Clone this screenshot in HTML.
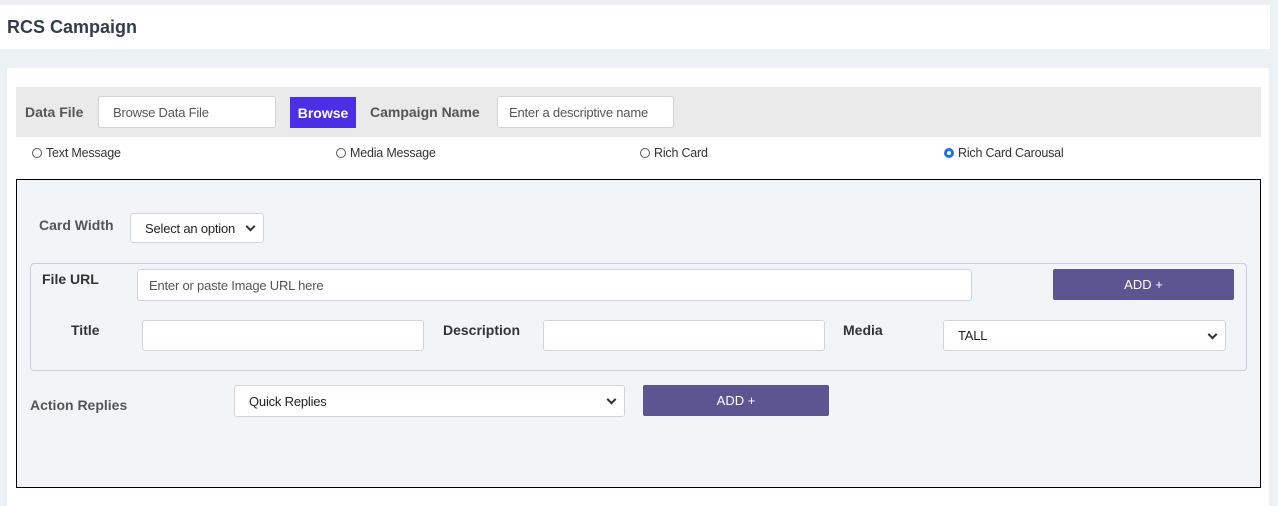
<!DOCTYPE html>
<html><head><style>
body{margin:0;width:1278px;height:506px;background:#ebf1f5;font-family:"Liberation Sans",sans-serif;position:relative;overflow:hidden}
.a{position:absolute;box-sizing:border-box}
.lbl{font-weight:bold;color:#555;font-size:14px}
.inp{background:#fff;border:1px solid #ced4da;border-radius:3px;font-size:13px;color:#555;padding-left:14px;display:flex;align-items:center;letter-spacing:-0.2px}
.btn{background:#5c5591;color:#fff;font-size:13px;display:flex;align-items:center;justify-content:center;border-radius:2px}
.r{font-size:12.5px;color:#333;display:flex;align-items:center;letter-spacing:-0.2px}
.r i{display:inline-block;width:10px;height:10px;border:1px solid #555;border-radius:50%;margin-right:4px;box-sizing:border-box}
.chev{position:absolute;right:9px;top:50%;width:5px;height:5px;border-right:2px solid #333;border-bottom:2px solid #333;transform:translateY(-70%) rotate(45deg)}
</style></head><body>
<div class="a" style="left:0;top:5px;width:1270px;height:44px;background:#fff"></div>
<div class="a" style="left:7px;top:17px;font-weight:bold;font-size:18px;color:#333c4e">RCS Campaign</div>
<div class="a" style="left:7px;top:68px;width:1262px;height:438px;background:#fff"></div>
<div class="a" style="left:16px;top:87px;width:1245px;height:50px;background:#eaeaea"></div>
<div class="a lbl" style="left:25px;top:104px">Data File</div>
<div class="a inp" style="left:98px;top:96px;width:178px;height:32px">Browse Data File</div>
<div class="a" style="left:290px;top:97px;width:66px;height:31px;background:#4b2ee6;color:#fff;font-weight:bold;font-size:14px;display:flex;align-items:center;justify-content:center">Browse</div>
<div class="a lbl" style="left:370px;top:104px">Campaign Name</div>
<div class="a inp" style="left:497px;top:96px;width:177px;height:32px;padding-left:11px">Enter a descriptive name</div>
<div class="a r" style="left:32px;top:146px"><i></i>Text Message</div>
<div class="a r" style="left:336px;top:146px"><i></i>Media Message</div>
<div class="a r" style="left:640px;top:146px"><i></i>Rich Card</div>
<div class="a r" style="left:944px;top:146px"><i style="border:3px solid #1a73e8"></i>Rich Card Carousal</div>
<div class="a" style="left:16px;top:179px;width:1245px;height:309px;background:#f2f5f8;border:1px solid #000"></div>
<div class="a lbl" style="left:39px;top:217px">Card Width</div>
<div class="a inp" style="left:130px;top:213px;width:134px;height:30px;color:#222">Select an option<span class="chev"></span></div>
<div class="a" style="left:30px;top:263px;width:1217px;height:108px;border:1px solid #ccd;border-radius:4px"></div>
<div class="a lbl" style="left:42px;top:271px;color:#333">File URL</div>
<div class="a inp" style="left:137px;top:269px;width:835px;height:32px;padding-left:11px">Enter or paste Image URL here</div>
<div class="a btn" style="left:1053px;top:269px;width:181px;height:31px">ADD +</div>
<div class="a lbl" style="left:71px;top:322px;color:#333">Title</div>
<div class="a inp" style="left:142px;top:320px;width:282px;height:31px"></div>
<div class="a lbl" style="left:443px;top:322px;color:#333">Description</div>
<div class="a inp" style="left:543px;top:320px;width:282px;height:31px"></div>
<div class="a lbl" style="left:843px;top:322px;color:#333">Media</div>
<div class="a inp" style="left:943px;top:320px;width:283px;height:31px;color:#222">TALL<span class="chev"></span></div>
<div class="a lbl" style="left:30px;top:397px">Action Replies</div>
<div class="a inp" style="left:234px;top:385px;width:391px;height:32px;color:#222">Quick Replies<span class="chev"></span></div>
<div class="a btn" style="left:643px;top:385px;width:186px;height:31px">ADD +</div>
</body></html>
